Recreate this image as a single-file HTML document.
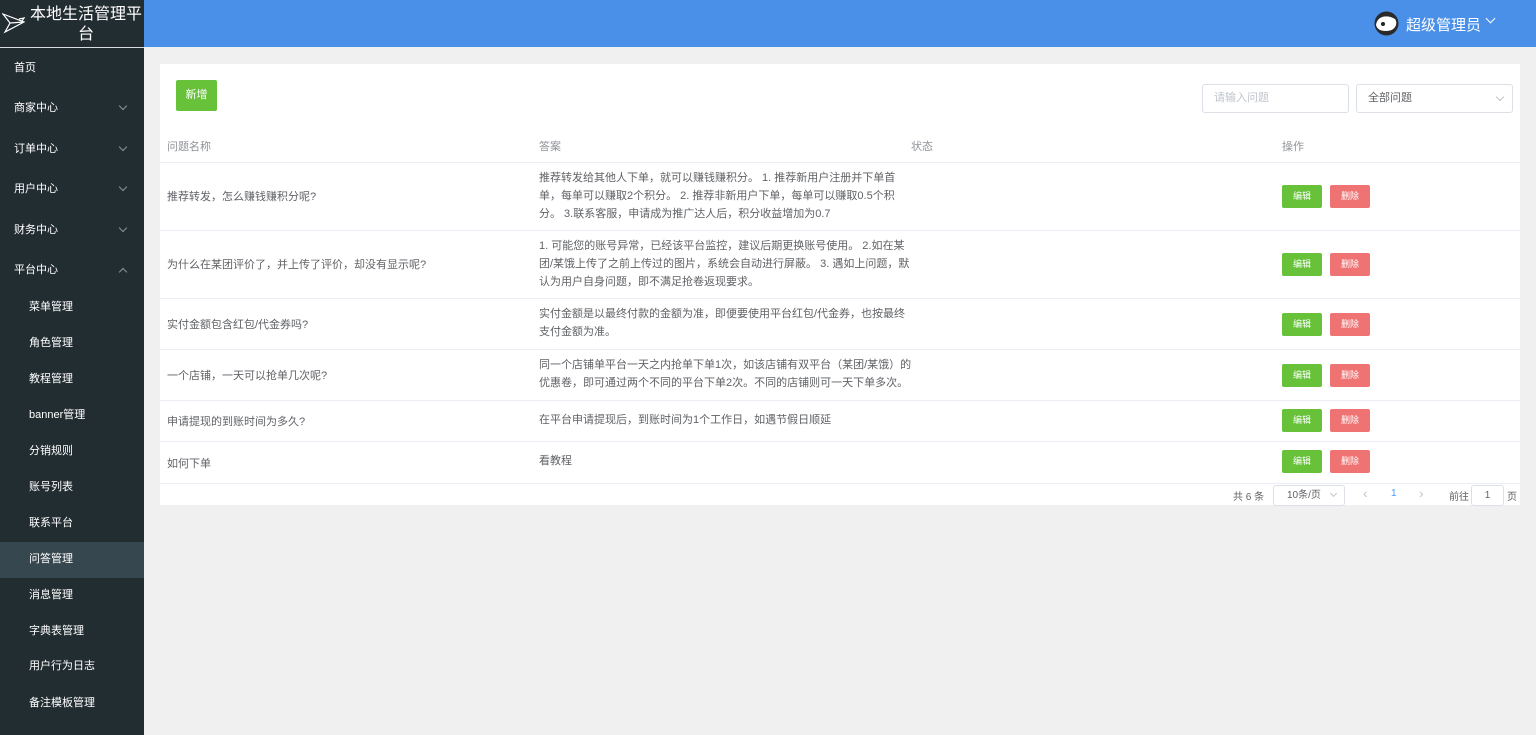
<!DOCTYPE html>
<html><head><meta charset="utf-8"><style>
*{margin:0;padding:0;box-sizing:border-box}
body{width:1536px;height:735px;overflow:hidden;background:#f0f0f0;font-family:"Liberation Sans","Noto Sans CJK SC",sans-serif;position:relative}
.side{position:absolute;left:0;top:0;width:144px;height:735px;background:#222d32}
.logo{height:48px;border-bottom:1px solid #d8dde0;position:relative;color:#fff;font-size:16px;line-height:20px;text-align:center}
.logo span{position:absolute;left:28px;top:5px;width:116px}
.item{position:absolute;left:0;width:144px;color:#fff;font-size:11px;line-height:16px}
.item .chev{position:absolute;left:120px;top:3px;width:6px;height:6px;border-right:1px solid #8a9499;border-bottom:1px solid #8a9499;transform:rotate(45deg)}
.item .up{transform:rotate(-135deg);top:7px}
.top{position:absolute;left:144px;top:0;right:0;height:47px;background:#4a90e8}
.card{position:absolute;left:160px;top:64px;width:1360px;height:441px;background:#fff}
.btn{position:absolute;color:#fff;font-size:9px;text-align:center;border-radius:2px}
.g{background:#67c23a}.r{background:#f07373}
.hd{position:absolute;top:74px;font-size:11px;color:#909399}
.row{position:absolute;left:0;width:1360px;border-top:1px solid #ebeef5;font-size:11px;color:#606266}
.c1{position:absolute;left:7px}
.c2{position:absolute;left:379px;width:374px;line-height:18px}
.inp{position:absolute;border:1px solid #dcdfe6;border-radius:3px;font-size:11px;height:29px;line-height:27px;padding-left:11px}
</style></head><body>
<div class="side">
<div class="logo">
<svg style="position:absolute;left:2px;top:12px" width="24" height="22" viewBox="0 0 24 22" fill="none" stroke="#fff" stroke-width="1.2"><path d="M1 2 L22 10 L3 20 L8 11 Z M8 11 L22 10 M1 2 L8 11 M17 7 L22 6 L20 9"/></svg>
<span>本地生活管理平台</span></div>
<div class="item" style="top:60px;padding-left:14px">首页</div>
<div class="item" style="top:100px;padding-left:14px">商家中心<i class="chev"></i></div>
<div class="item" style="top:141px;padding-left:14px">订单中心<i class="chev"></i></div>
<div class="item" style="top:181px;padding-left:14px">用户中心<i class="chev"></i></div>
<div class="item" style="top:222px;padding-left:14px">财务中心<i class="chev"></i></div>
<div class="item" style="top:262px;padding-left:14px">平台中心<i class="chev up"></i></div>
<div class="item" style="top:299px;padding-left:29px">菜单管理</div>
<div class="item" style="top:335px;padding-left:29px">角色管理</div>
<div class="item" style="top:371px;padding-left:29px">教程管理</div>
<div class="item" style="top:407px;padding-left:29px">banner管理</div>
<div class="item" style="top:443px;padding-left:29px">分销规则</div>
<div class="item" style="top:479px;padding-left:29px">账号列表</div>
<div class="item" style="top:515px;padding-left:29px">联系平台</div>
<div style="position:absolute;top:542px;left:0;width:144px;height:36px;background:#37474f"></div>
<div class="item" style="top:551px;padding-left:29px">问答管理</div>
<div class="item" style="top:587px;padding-left:29px">消息管理</div>
<div class="item" style="top:623px;padding-left:29px">字典表管理</div>
<div class="item" style="top:658px;padding-left:29px">用户行为日志</div>
<div class="item" style="top:695px;padding-left:29px">备注模板管理</div>
</div>
<div class="top">
<svg style="position:absolute;left:1230px;top:11px" width="25" height="25" viewBox="0 0 25 25"><circle cx="12.5" cy="12.5" r="12" fill="#2a2a2a"/><path d="M2 14 C3 5 13 3 21 8 C24 12 22 20 12 20 C6 20 3 18 2 14Z" fill="#fff"/><circle cx="9" cy="13" r="2" fill="#222"/></svg>
<div style="position:absolute;left:1262px;top:14px;color:#fff;font-size:15px">超级管理员</div>
<div style="position:absolute;left:1343px;top:15px;width:7px;height:7px;border-right:1.5px solid #fff;border-bottom:1.5px solid #fff;transform:rotate(45deg)"></div>
</div>
<div class="card">
<div class="btn g" style="left:16px;top:16px;width:41px;height:31px;line-height:31px;font-size:11px">新增</div>
<div class="inp" style="left:1042px;top:20px;width:147px;color:#c0c4cc">请输入问题</div>
<div class="inp" style="left:1196px;top:20px;width:157px;color:#606266">全部问题<i style="position:absolute;right:9px;top:9px;width:6px;height:6px;border-right:1px solid #c0c4cc;border-bottom:1px solid #c0c4cc;transform:rotate(45deg)"></i></div>
<div class="hd" style="left:7px">问题名称</div>
<div class="hd" style="left:379px">答案</div>
<div class="hd" style="left:751px">状态</div>
<div class="hd" style="left:1122px">操作</div>

<div class="row" style="top:98px;height:68px"><div class="c1" style="top:25px">推荐转发，怎么赚钱赚积分呢?</div><div class="c2" style="top:6px">推荐转发给其他人下单，就可以赚钱赚积分。 1. 推荐新用户注册并下单首单，每单可以赚取2个积分。 2. 推荐非新用户下单，每单可以赚取0.5个积分。 3.联系客服，申请成为推广达人后，积分收益增加为0.7</div>
<div class="btn g" style="left:1122px;top:22px;width:40px;height:23px;line-height:23px">编辑</div><div class="btn r" style="left:1170px;top:22px;width:40px;height:23px;line-height:23px">删除</div></div>

<div class="row" style="top:166px;height:68px"><div class="c1" style="top:25px">为什么在某团评价了，并上传了评价，却没有显示呢?</div><div class="c2" style="top:6px">1. 可能您的账号异常，已经该平台监控，建议后期更换账号使用。 2.如在某团/某饿上传了之前上传过的图片，系统会自动进行屏蔽。 3. 遇如上问题，默认为用户自身问题，即不满足抢卷返现要求。</div>
<div class="btn g" style="left:1122px;top:22px;width:40px;height:23px;line-height:23px">编辑</div><div class="btn r" style="left:1170px;top:22px;width:40px;height:23px;line-height:23px">删除</div></div>

<div class="row" style="top:234px;height:51px"><div class="c1" style="top:17px">实付金额包含红包/代金券吗?</div><div class="c2" style="top:6px">实付金额是以最终付款的金额为准，即便要使用平台红包/代金券，也按最终支付金额为准。</div>
<div class="btn g" style="left:1122px;top:14px;width:40px;height:23px;line-height:23px">编辑</div><div class="btn r" style="left:1170px;top:14px;width:40px;height:23px;line-height:23px">删除</div></div>

<div class="row" style="top:285px;height:51px"><div class="c1" style="top:17px">一个店铺，一天可以抢单几次呢?</div><div class="c2" style="top:6px">同一个店铺单平台一天之内抢单下单1次，如该店铺有双平台（某团/某饿）的优惠卷，即可通过两个不同的平台下单2次。不同的店铺则可一天下单多次。</div>
<div class="btn g" style="left:1122px;top:14px;width:40px;height:23px;line-height:23px">编辑</div><div class="btn r" style="left:1170px;top:14px;width:40px;height:23px;line-height:23px">删除</div></div>

<div class="row" style="top:336px;height:41px"><div class="c1" style="top:12px">申请提现的到账时间为多久?</div><div class="c2" style="top:10px">在平台申请提现后，到账时间为1个工作日，如遇节假日顺延</div>
<div class="btn g" style="left:1122px;top:8px;width:40px;height:23px;line-height:23px">编辑</div><div class="btn r" style="left:1170px;top:8px;width:40px;height:23px;line-height:23px">删除</div></div>

<div class="row" style="top:377px;height:42px"><div class="c1" style="top:13px">如何下单</div><div class="c2" style="top:10px">看教程</div>
<div class="btn g" style="left:1122px;top:8px;width:40px;height:23px;line-height:23px">编辑</div><div class="btn r" style="left:1170px;top:8px;width:40px;height:23px;line-height:23px">删除</div></div>

<div class="row" style="top:419px;height:22px;font-size:10px">
<div style="position:absolute;left:1073px;top:4px">共 6 条</div>
<div style="position:absolute;left:1113px;top:1px;width:72px;height:21px;border:1px solid #dcdfe6;border-radius:3px;padding-left:13px;line-height:19px">10条/页<i style="position:absolute;right:8px;top:5px;width:5px;height:5px;border-right:1px solid #c0c4cc;border-bottom:1px solid #c0c4cc;transform:rotate(45deg)"></i></div>
<div style="position:absolute;left:1203px;top:1px;color:#c0c4cc;font-size:14px">‹</div>
<div style="position:absolute;left:1231px;top:4px;color:#409eff">1</div>
<div style="position:absolute;left:1259px;top:1px;color:#c0c4cc;font-size:14px">›</div>
<div style="position:absolute;left:1289px;top:4px">前往</div>
<div style="position:absolute;left:1311px;top:1px;width:33px;height:21px;border:1px solid #dcdfe6;border-radius:3px;text-align:center;line-height:19px">1</div>
<div style="position:absolute;left:1347px;top:4px">页</div>
</div>
</div>
</body></html>
